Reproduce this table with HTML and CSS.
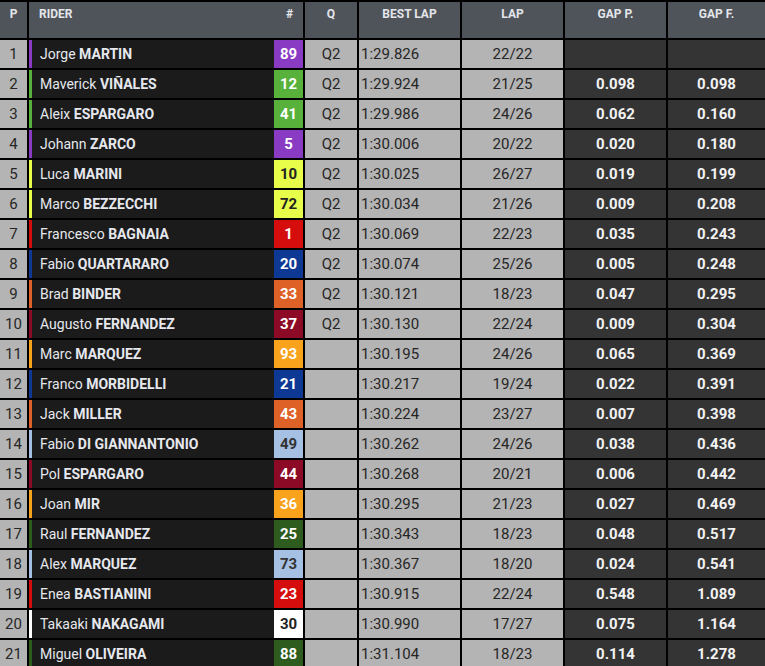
FILE: index.html
```html
<!DOCTYPE html>
<html>
<head>
<meta charset="utf-8">
<link rel="stylesheet" href="styles.css">
</head>
<body>
<div class="table">
  <div class="row head">
    <div class="c hp">P</div>
    <div class="c hrider"><span>RIDER</span><span class="hash">#</span></div>
    <div class="c hc">Q</div>
    <div class="c hc">BEST LAP</div>
    <div class="c hc">LAP</div>
    <div class="c hc">GAP P.</div>
    <div class="c hc">GAP F.</div>
  </div>
  <div id="rows"></div>
</div>
<script src="script.js"></script>
</body>
</html>
```
FILE: script.js
```js
const T = {
  purple: ['#8a3bc4', '#fff'],
  green: ['#58b13a', '#fff'],
  yellow: ['#e7fd4a', '#222'],
  red: ['#d50d0d', '#fff'],
  blue: ['#0d3893', '#fff'],
  orange: ['#de6128', '#fff'],
  maroon: ['#8c0a26', '#fff'],
  amber: ['#f9a21b', '#fff'],
  lblue: ['#a6c0e3', '#333'],
  dgreen: ['#2d5c1e', '#fff'],
  white: ['#ffffff', '#222']
};
const data = [
  ['Jorge','MARTIN',89,'purple','Q2','1:29.826','22/22','',''],
  ['Maverick','VIÑALES',12,'green','Q2','1:29.924','21/25','0.098','0.098'],
  ['Aleix','ESPARGARO',41,'green','Q2','1:29.986','24/26','0.062','0.160'],
  ['Johann','ZARCO',5,'purple','Q2','1:30.006','20/22','0.020','0.180'],
  ['Luca','MARINI',10,'yellow','Q2','1:30.025','26/27','0.019','0.199'],
  ['Marco','BEZZECCHI',72,'yellow','Q2','1:30.034','21/26','0.009','0.208'],
  ['Francesco','BAGNAIA',1,'red','Q2','1:30.069','22/23','0.035','0.243'],
  ['Fabio','QUARTARARO',20,'blue','Q2','1:30.074','25/26','0.005','0.248'],
  ['Brad','BINDER',33,'orange','Q2','1:30.121','18/23','0.047','0.295'],
  ['Augusto','FERNANDEZ',37,'maroon','Q2','1:30.130','22/24','0.009','0.304'],
  ['Marc','MARQUEZ',93,'amber','','1:30.195','24/26','0.065','0.369'],
  ['Franco','MORBIDELLI',21,'blue','','1:30.217','19/24','0.022','0.391'],
  ['Jack','MILLER',43,'orange','','1:30.224','23/27','0.007','0.398'],
  ['Fabio','DI GIANNANTONIO',49,'lblue','','1:30.262','24/26','0.038','0.436'],
  ['Pol','ESPARGARO',44,'maroon','','1:30.268','20/21','0.006','0.442'],
  ['Joan','MIR',36,'amber','','1:30.295','21/23','0.027','0.469'],
  ['Raul','FERNANDEZ',25,'dgreen','','1:30.343','18/23','0.048','0.517'],
  ['Alex','MARQUEZ',73,'lblue','','1:30.367','18/20','0.024','0.541'],
  ['Enea','BASTIANINI',23,'red','','1:30.915','22/24','0.548','1.089'],
  ['Takaaki','NAKAGAMI',30,'white','','1:30.990','17/27','0.075','1.164'],
  ['Miguel','OLIVEIRA',88,'dgreen','','1:31.104','18/23','0.114','1.278']
];
const root = document.getElementById('rows');
data.forEach((d, i) => {
  const [bg, fg] = T[d[3]];
  const row = document.createElement('div');
  row.className = 'row';
  row.innerHTML =
    `<div class="c pos">${i + 1}</div>` +
    `<div class="c rider" style="border-left-color:${bg}"><span class="name">${d[0]} <b>${d[1]}</b></span><span class="num" style="background:${bg};color:${fg}">${d[2]}</span></div>` +
    `<div class="c light">${d[4]}</div>` +
    `<div class="c light best">${d[5]}</div>` +
    `<div class="c light">${d[6]}</div>` +
    `<div class="c dark">${d[7]}</div>` +
    `<div class="c dark">${d[8]}</div>`;
  root.appendChild(row);
});
```
FILE: styles.css
```css
html, body {
  margin: 0;
  padding: 0;
  background: #000;
  overflow: hidden;
}
.table {
  width: 765px;
  background: #000;
  padding-top: 2px;
  font-family: Roboto, "Liberation Sans", sans-serif;
}
#rows {
  display: flex;
  flex-direction: column;
  gap: 2px;
  margin-top: 2px;
}
.row {
  display: grid;
  grid-template-columns: 27px 274px 52px 101px 101px 101px 1fr;
  column-gap: 2px;
  height: 28px;
}
.row.head {
  height: 36px;
}
.c {
  display: flex;
  align-items: center;
  justify-content: center;
  font-size: 15px;
  color: #262626;
}
.head .c {
  background: #4f545b;
  color: #e4e6ea;
  font-weight: 700;
  font-size: 12px;
  align-items: flex-start;
  padding-top: 5px;
  box-sizing: border-box;
}
.head .hrider {
  justify-content: space-between;
  padding-left: 10px;
  padding-right: 10px;
}
.pos {
  background: #b4b4b4;
}
.light {
  background: #b4b4b4;
}
.best {
  justify-content: flex-start;
  padding-left: 2px;
}
.dark {
  background: #343434;
  color: #f2f2f2;
  font-weight: 700;
}
.rider {
  background: #1b1b1b;
  border-left: 3px solid #000;
  justify-content: space-between;
  padding-left: 8px;
}
.name {
  color: #e6e8ee;
  font-size: 14px;
}
.name b {
  font-weight: 700;
}
.num {
  width: 29px;
  height: 100%;
  display: flex;
  align-items: center;
  justify-content: center;
  font-weight: 700;
  font-size: 15px;
}
```
